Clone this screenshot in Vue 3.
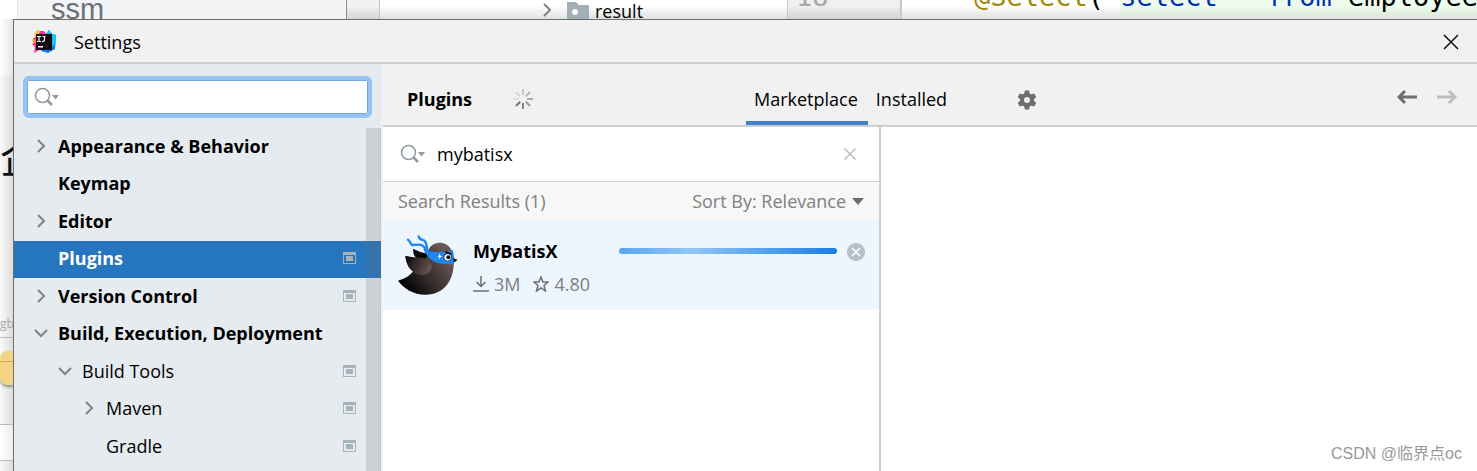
<template>
  <div class="desktop">
    <div class="back-top">
      <div class="bt-edge"></div>
      <div class="bt-project">ssm</div>
      <div class="bt-side"></div>
      <div class="bt-tree">
        <svg class="chev" viewBox="0 0 14 16"><path d="M4 2l6 6-6 6" /></svg>
        <svg class="folder" viewBox="0 0 22 18">
          <path d="M0 1h9l3 3h10v14H0z" fill="#a3afb7" />
          <circle cx="8" cy="11" r="3" fill="#fff" />
        </svg>
        <span>result</span>
      </div>
      <div class="bt-gutter">18</div>
      <div class="bt-code">
        <span class="anno">@Select</span><span>(</span><span class="quote">"</span>
        <span class="sql"><b>select * from</b> employee</span>
      </div>
    </div>

    <div class="back-left">
      <div class="bl-top"></div>
      <div class="bl-title">企</div>
      <div class="bl-name">gb</div>
      <div class="bl-tag"><i></i></div>
      <div class="bl-foot"></div>
    </div>

    <div class="dialog">
      <header class="titlebar">
        <svg class="logo" viewBox="0 0 24 24">
          <path d="M2 4L5 0l7 2-3 11-9-3 3-3z" fill="#fcc34b" />
          <path d="M8 1l4 0 3 4-6 14-7 4 1-6-3-3 3-2-2-4 5-1z" fill="#ff318c" />
          <path d="M0 11l4-2v5z" fill="#ff8a2b" />
          <path d="M14 4l3-4 3 4 4 1-1 14-7 4-7-2 3-9z" fill="#087cfa" />
          <path d="M14 4l3-4 3 4 4 1v7l-4 5-6-9z" fill="#18c5f5" />
          <path d="M4 4h16v16H4z" fill="#120b10" />
          <path d="M5 6.500h4M7 6v5M5 11.500h4M10.500 6.500h3M12.500 6v4q0 1.500-2.500 1.500" fill="none" stroke="#fff" stroke-width="1.200" />
          <path d="M6 16h5v1.500H6z" fill="#fff" />
        </svg>
        <span class="title">Settings</span>
        <button type="button" class="icon-btn close" aria-label="Close">
          <svg width="16" height="16" viewBox="0 0 16 16"><path d="M1 1l14 14M15 1L1 15" fill="none" stroke="#111" stroke-width="1.500" /></svg>
        </button>
      </header>

      <div class="content">
        <aside class="sidebar">
          <div class="search-wrap">
            <label class="search-box" for="settings-search">
              <svg class="magnifier" viewBox="0 0 26 20">
                <circle cx="8.500" cy="8.500" r="7" /><path d="M13 13l5 5" class="handle" />
                <path d="M18 8h7l-3.500 4.500z" class="arrow" />
              </svg>
              <input id="settings-search" v-model="settingsQuery" type="text" aria-label="Search settings" />
            </label>
          </div>
          <nav class="tree">
            <a
              v-for="item in items"
              :key="item.label"
              href="#"
              class="node"
              :class="['level-' + item.level, { selected: item.label === selected }]"
              @click.prevent="selected = item.label"
            >
              <span class="toggle">
                <svg v-if="item.state" class="chev" :class="item.state" viewBox="0 0 14 16"><path d="M4 2l6 6-6 6" /></svg>
              </span>
              <span class="node-label">{{ item.label }}</span>
              <svg v-if="item.project" class="project-mark" viewBox="0 0 13 12">
                <path d="M0 0h13v12H0zM1 3v8h11V3z" fill-rule="evenodd" />
                <path d="M3 4h7v5H3z" />
              </svg>
            </a>
            <div class="scrollbar"></div>
          </nav>
        </aside>

        <main class="main">
          <div class="toolbar">
            <h1>
              Plugins
              <svg class="spinner" viewBox="0 0 20 20">
                <path
                  v-for="(opacity, i) in spokes"
                  :key="i"
                  d="M10 0v6"
                  :opacity="opacity"
                  :transform="`rotate(${i * 45} 10 10)`"
                />
              </svg>
            </h1>
            <button
              v-for="name in tabs"
              :key="name"
              type="button"
              class="tab"
              :class="{ active: tab === name }"
              @click="tab = name"
            >{{ name }}</button>
            <button type="button" class="icon-btn gear" aria-label="Plugin settings">
              <svg width="20" height="20" viewBox="0 0 20 20">
                <g fill="#6e6e6e">
                  <path v-for="n in 3" :key="n" d="M8 0.500h4l1 4H7zM7 15.500h6l-1 4H8z" :transform="`rotate(${n * 60} 10 10)`" />
                </g>
                <circle cx="10" cy="10" r="5" fill="none" stroke="#6e6e6e" stroke-width="4" />
              </svg>
            </button>
            <div class="history">
              <button type="button" class="icon-btn" aria-label="Back">
                <svg width="20" height="16" viewBox="0 0 20 16"><path d="M20 8H2M8 2L2 8l6 6" fill="none" stroke="#6e6e6e" stroke-width="3" /></svg>
              </button>
              <button type="button" class="icon-btn" aria-label="Forward" disabled>
                <svg width="20" height="16" viewBox="0 0 20 16"><path d="M0 8h18M12 2l6 6-6 6" fill="none" stroke="#bdbdbd" stroke-width="3" /></svg>
              </button>
            </div>
          </div>

          <div class="panes">
            <section class="results">
              <div class="plugin-search">
                <svg class="magnifier" viewBox="0 0 26 20">
                  <circle cx="8.500" cy="8.500" r="7" /><path d="M13 13l5 5" class="handle" />
                  <path d="M18 8h7l-3.500 4.500z" class="arrow" />
                </svg>
                <input v-model="pluginQuery" type="text" aria-label="Search plugins" />
                <button type="button" class="icon-btn" aria-label="Clear" @click="pluginQuery = ''">
                  <svg width="12" height="12" viewBox="0 0 12 12"><path d="M0.500 0.500l11 11M11.500 0.500l-11 11" fill="none" stroke="#b8bec2" stroke-width="1.500" /></svg>
                </button>
              </div>
              <div class="results-head">
                <span>Search Results (1)</span>
                <button type="button" class="sort">
                  Sort By: Relevance
                  <svg width="12" height="7" viewBox="0 0 12 7"><path d="M0 0h12L6 7z" fill="#6e6e6e" /></svg>
                </button>
              </div>
              <article class="plugin">
                <svg class="bird" viewBox="24 30 180 180">
                  <defs>
                    <linearGradient id="body" gradientUnits="userSpaceOnUse" x1="50" y1="190" x2="175" y2="90">
                      <stop offset="0" stop-color="#000" />
                      <stop offset="0.400" stop-color="#332a2a" />
                      <stop offset="1" stop-color="#6b5856" />
                    </linearGradient>
                    <linearGradient id="wing" gradientUnits="userSpaceOnUse" x1="50" y1="95" x2="125" y2="130">
                      <stop offset="0" stop-color="#0c090a" />
                      <stop offset="1" stop-color="#6b5856" />
                    </linearGradient>
                  </defs>
                  <path d="M118 70C132 46 184 42 191 98C196 160 166 209 108 209C68 209 42 190 24 167C44 162 60 152 70 139C54 127 48 112 46 93L78 99Q68 88 70 72Q88 84 112 84Z" fill="url(#body)" />
                  <path d="M70 72Q70 88 78 97L104 102 116 90Q90 82 70 72Z" fill="#080606" />
                  <path d="M46 93C82 101 110 92 123 115C132 136 112 150 96 150C66 148 50 126 46 93Z" fill="url(#wing)" />
                  <path d="M100 70Q116 82 142 82Q168 82 188 75Q194 96 191 117Q152 120 130 108Q108 96 100 70Z" fill="#1e88f0" />
                  <path d="M108 80C104 54 82 58 70 60C60 62 64 50 54 44M114 80C108 62 112 58 104 48C98 42 90 48 86 34" fill="none" stroke="#1e88f0" stroke-width="7" stroke-linecap="round" />
                  <circle cx="173" cy="96" r="12" fill="#111" />
                  <circle cx="173" cy="97" r="10" fill="#fff" />
                  <circle cx="175" cy="97" r="6" fill="#111" />
                  <path d="M165 80l20 7" stroke="#111" stroke-width="4" />
                  <path d="M149 84l2 8 7 2-7 2-2 8-2-8-6-2 6-2z" fill="#fff" />
                  <path d="M190 99l13 6-12 8z" fill="#111" />
                </svg>
                <div class="plugin-info">
                  <h2>MyBatisX</h2>
                  <p class="stats">
                    <svg width="16" height="16" viewBox="0 0 16 16"><path d="M8 0v10M3.500 6l4.500 4.500L12.500 6M0 15h16" /></svg>
                    <span class="downloads">3M</span>
                    <svg width="16" height="16" viewBox="0 0 16 16"><path d="M8 1l2 5h5l-4 3.500 1.500 5.500L8 12l-4.500 3L5 9.500 1 6h5z" /></svg>
                    <span>4.80</span>
                  </p>
                </div>
                <div class="progress" role="progressbar" aria-label="Installing MyBatisX"></div>
                <button type="button" class="icon-btn cancel" aria-label="Cancel">
                  <svg width="18" height="18" viewBox="0 0 18 18">
                    <circle cx="9" cy="9" r="9" fill="#b4bfc7" />
                    <path d="M5 5l8 8M13 5l-8 8" stroke="#fff" stroke-width="1.500" />
                  </svg>
                </button>
              </article>
            </section>
            <section class="details"></section>
          </div>
        </main>
      </div>
    </div>

    <div class="watermark">CSDN @临界点oc</div>
  </div>
</template>

<script setup>
import { ref } from 'vue'

const settingsQuery = ref('')
const pluginQuery = ref('mybatisx')
const selected = ref('Plugins')
const tab = ref('Marketplace')
const tabs = ['Marketplace', 'Installed']

// starts at the top spoke, clockwise
const spokes = [0.35, 0.45, 0.55, 0.7, 0.85, 1, 0.12, 0.2]

const items = [
  { label: 'Appearance & Behavior', level: 0, state: 'closed' },
  { label: 'Keymap', level: 0 },
  { label: 'Editor', level: 0, state: 'closed' },
  { label: 'Plugins', level: 0, project: true },
  { label: 'Version Control', level: 0, state: 'closed', project: true },
  { label: 'Build, Execution, Deployment', level: 0, state: 'open' },
  { label: 'Build Tools', level: 1, state: 'open', project: true },
  { label: 'Maven', level: 2, state: 'closed', project: true },
  { label: 'Gradle', level: 2, project: true },
]
</script>

<style>
body {
  margin: 0;
  background: #fff;
}
</style>

<style scoped>
* {
  box-sizing: border-box;
}
.desktop {
  position: relative;
  display: grid;
  grid-template-columns: 13px minmax(0, 1fr);
  grid-template-rows: 19px minmax(0, 1fr);
  height: 100vh;
  overflow: hidden;
  font-family: 'Open Sans', 'Noto Sans CJK SC', sans-serif;
  font-size: 18px;
  line-height: 24px;
  color: #000;
}
button,
input {
  font: inherit;
  color: inherit;
  border: none;
  background: none;
  padding: 0;
}
button {
  cursor: pointer;
}
input {
  min-width: 0;
  flex: 1;
  outline: none;
}
svg {
  display: block;
  flex: none;
}

/* windows behind the dialog */
.back-top {
  grid-column: 1 / -1;
  display: flex;
  overflow: hidden;
  background: #fff;
}
.back-top > div {
  flex: none;
  display: flex;
  overflow: hidden;
  background-image: linear-gradient(rgba(0, 0, 0, 0) 30%, rgba(0, 0, 0, 0.12));
}
.back-top .bt-edge {
  width: 17px;
  background-image: none;
}
.back-top .bt-project {
  width: 330px;
  padding-left: 33px;
  align-items: flex-end;
  background-color: #f3f4f6;
  background-image: none;
  border-left: 1px solid #e2e3e5;
  border-right: 1px solid #8e8e8e;
  font-family: 'Liberation Sans', sans-serif;
  font-size: 29px;
  line-height: 20px;
  color: #6b7076;
}
.bt-side {
  width: 33px;
  background-color: #f2f2f2;
  border-right: 1px solid #c4c4c4;
}
.bt-tree {
  width: 407px;
  padding-left: 160px;
  align-items: flex-end;
}
.bt-tree .chev {
  margin-bottom: 1px;
}
.folder {
  width: 22px;
  height: 18px;
  margin: 0 6px 0 13px;
}
.bt-tree span {
  line-height: 16px;
}
.bt-gutter {
  width: 115px;
  padding: 0 0 9px 8px;
  align-items: flex-end;
  background-color: #f0f0f0;
  border-left: 1px solid #c9c9c9;
  border-right: 2px solid #c9c9c9;
  font-family: 'DejaVu Sans Mono', monospace;
  font-size: 27px;
  line-height: 27px;
  color: #a8a8a8;
}
.back-top .bt-code {
  flex: 1;
  padding-left: 72px;
  align-items: flex-end;
  font-family: 'DejaVu Sans Mono', monospace;
  font-size: 27px;
  line-height: 27px;
  white-space: pre;
}
.bt-code span {
  padding-bottom: 9px;
}
.anno {
  color: #9e880d;
}
.quote,
.sql b {
  color: #0033b3;
  font-weight: 400;
}
.bt-code .sql {
  flex: 1;
  margin-bottom: 3px;
  padding-bottom: 6px;
  background: linear-gradient(#edfcec 70%, #dcebdb);
}
.back-left {
  display: flex;
  flex-direction: column;
  overflow: hidden;
  background: linear-gradient(90deg, #fafafa, #dcdcdc);
}
.bl-top {
  height: 57px;
  flex: none;
  background: linear-gradient(90deg, #fff, #e6e6e6);
}
.bl-title {
  height: 220px;
  flex: none;
  padding-top: 58px;
  font-size: 40px;
  line-height: 48px;
  color: #111;
}
.bl-name {
  height: 42px;
  flex: none;
  padding-top: 20px;
  border-bottom: 1px solid #bbb;
  font-size: 12px;
  line-height: 16px;
  color: #aaa;
}
.bl-tag {
  height: 87px;
  flex: none;
  padding-top: 13px;
  border-bottom: 1px solid #bbb;
}
.bl-tag i {
  display: block;
  height: 34px;
  border-radius: 8px 0 0 8px;
  background: linear-gradient(#f5d384 30%, #c9ab67 30%, #c9ab67 33%, #f5d384 33%);
  box-shadow: 0 2px 3px rgba(0, 0, 0, 0.4);
}
.bl-foot {
  height: 36px;
  flex: none;
  background: linear-gradient(90deg, #fff, #ececec);
  border-bottom: 1px solid #bbb;
}

/* settings dialog */
.dialog {
  display: flex;
  flex-direction: column;
  min-width: 0;
  background: #f1f1f1;
  border-top: 1px solid #6e6e6e;
  border-left: 1px solid #6e6e6e;
}
.titlebar {
  height: 44px;
  flex: none;
  display: flex;
  align-items: center;
  padding: 1px 18px 0;
  border-bottom: 2px solid #cfcfcf;
}
.logo {
  width: 24px;
  height: 24px;
  margin-right: 18px;
}
.close {
  margin-left: auto;
}
.content {
  flex: 1;
  display: flex;
  min-height: 0;
}
.sidebar {
  width: 367px;
  flex: none;
  display: flex;
  flex-direction: column;
  background: #e5ebef;
}
.search-wrap {
  padding: 12px 9px 10px;
}
.search-box {
  height: 42px;
  display: flex;
  align-items: center;
  padding: 0 7px;
  background: #fff;
  border: 4px solid #97c3f3;
  border-radius: 6px;
  box-shadow: inset 0 0 0 1px #7aa7da;
}
.magnifier {
  width: 26px;
  height: 20px;
}
.magnifier circle,
.magnifier .handle {
  fill: none;
  stroke: #8f999f;
  stroke-width: 1.5;
}
.magnifier .handle {
  stroke-width: 2.5;
}
.magnifier .arrow {
  fill: #8f999f;
}
.tree {
  position: relative;
  flex: 1;
  min-height: 0;
  display: grid;
  grid-auto-rows: 38px 37px;
  overflow: hidden;
}
.node {
  display: flex;
  align-items: center;
  padding: 0 25px 3px 20px;
  color: #000;
  text-decoration: none;
}
.level-0 {
  font-weight: 700;
}
.level-1 {
  padding-left: 44px;
}
.level-2 {
  padding-left: 68px;
}
.node.selected {
  background: #2675bf;
  color: #fff;
}
.toggle {
  width: 24px;
  flex: none;
}
.chev {
  width: 14px;
  height: 16px;
  fill: none;
  stroke: #7f8386;
  stroke-width: 2;
}
.chev.open {
  transform: rotate(90deg);
}
.node-label {
  flex: 1;
}
.project-mark {
  width: 13px;
  height: 12px;
  fill: #a6b3bb;
}
.scrollbar {
  position: absolute;
  top: 0;
  right: 0;
  bottom: 0;
  width: 15px;
  background: rgba(110, 110, 110, 0.2);
  border-right: 1px solid rgba(110, 110, 110, 0.1);
}

/* plugins page */
.main {
  flex: 1;
  min-width: 0;
  display: flex;
  flex-direction: column;
  padding-left: 2px;
}
.toolbar {
  height: 63px;
  flex: none;
  display: flex;
  align-items: stretch;
  padding-right: 20px;
  border-bottom: 2px solid #cfcfcf;
}
h1 {
  width: 363px;
  display: flex;
  align-items: center;
  gap: 41px;
  margin: 0;
  padding: 8px 0 0 24px;
  font-size: 18px;
  line-height: 24px;
}
.spinner {
  width: 20px;
  height: 20px;
  fill: none;
  stroke: #6f7486;
  stroke-width: 2;
}
.tab {
  padding: 12px 10px 0 8px;
  border-bottom: 4px solid transparent;
}
.tab.active {
  border-bottom-color: #4083c9;
}
.gear {
  margin: 10px 0 0 60px;
}
.history {
  display: flex;
  gap: 20px;
  margin-left: auto;
  padding-top: 4px;
}
.panes {
  flex: 1;
  display: flex;
  min-height: 0;
}
.results {
  width: 498px;
  flex: none;
  background: #fff;
  border-right: 2px solid #cfcfcf;
}
.plugin-search {
  height: 55px;
  display: flex;
  align-items: center;
  gap: 11px;
  padding: 0 23px 1px 17px;
  border-bottom: 1px solid #cfcfcf;
}
.results-head {
  height: 38px;
  display: flex;
  align-items: center;
  justify-content: space-between;
  padding: 0 15px;
  background: #f7f7f7;
  color: #808080;
}
.sort {
  display: flex;
  align-items: center;
  gap: 6px;
}
.plugin {
  height: 90px;
  display: flex;
  align-items: flex-start;
  padding: 15px 14px 0 15px;
  background: #edf5ff;
}
.bird {
  width: 60px;
  height: 60px;
}
.plugin-info {
  width: 146px;
  margin-left: 15px;
}
h2 {
  margin: 4px 0 9px;
  font-size: 18px;
  line-height: 24px;
}
.stats {
  display: flex;
  align-items: center;
  gap: 5px;
  margin: 0;
  color: #808080;
}
.stats svg {
  fill: none;
  stroke: #6e6e6e;
  stroke-width: 1.5;
}
.downloads {
  margin-right: 8px;
}
.progress {
  flex: 1;
  height: 6px;
  margin: 13px 10px 0 0;
  border-radius: 3px;
  background: linear-gradient(90deg, #5ba6ef, #92c6f5 33%, #1c7de6);
}
.cancel {
  margin-top: 8px;
}
.details {
  flex: 1;
  background: #fff;
}
.watermark {
  position: absolute;
  right: 15px;
  bottom: 5px;
  font-family: 'Liberation Sans', 'Noto Sans CJK SC', sans-serif;
  font-size: 16px;
  color: #999;
}
</style>
